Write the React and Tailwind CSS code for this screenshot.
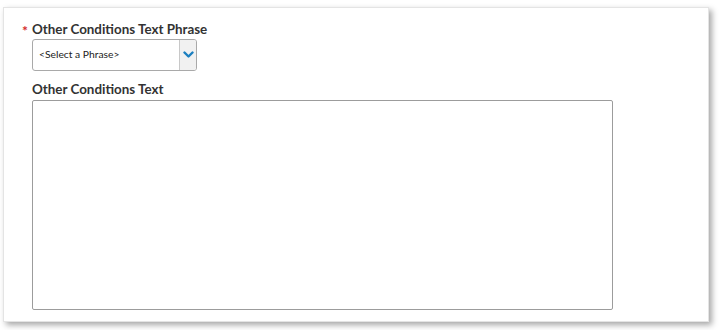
import React from 'react';

const Chevron = () => (
  <svg width="11" height="8" viewBox="0 0 11 8" fill="none">
    <path d="M1.5 1.5 L5.5 5.5 L9.5 1.5" stroke="#1b7fc0" strokeWidth="2.4" strokeLinecap="round" strokeLinejoin="round" />
  </svg>
);

const App = () => {
  return (
    <div className="w-[722px] h-[330px] bg-white pt-[7px] pl-[3px]" style={{ fontFamily: 'Lato, "Liberation Sans", sans-serif' }}>
      <div className="w-[706px] h-[315px] bg-white border border-[#e4e4e4] shadow-[3px_3px_6px_rgba(0,0,0,0.35)] pl-[18px] pt-[13px]">
        {/* phrase select */}
        <div className="flex items-center gap-[4px] h-[17px]">
          <span className="text-[#d42a2a] text-[14px] font-bold leading-none mt-[3px]">*</span>
          <label className="text-[13.4px] font-bold text-[#333] leading-none">Other Conditions Text Phrase</label>
        </div>
        <div className="ml-[10px] mt-[1px] w-[165px] h-[32px] border border-[#a9a9a9] rounded-[3px] flex overflow-hidden">
          <div className="flex-1 flex items-center pl-[6px] text-[10.3px] text-[#222]">&lt;Select a Phrase&gt;</div>
          <div className="w-[17px] border-l border-[#c8c8c8] bg-[#f1f1f1] flex items-center justify-center">
            <Chevron />
          </div>
        </div>

        {/* free text */}
        <label className="block ml-[10px] mt-[12px] text-[13.4px] font-bold text-[#333] leading-none">Other Conditions Text</label>
        <textarea className="block ml-[10px] mt-[4px] w-[581px] h-[210px] border border-[#9c9c9c] rounded-[2px] resize-none outline-none" />
      </div>
    </div>
  );
};

export default App;
